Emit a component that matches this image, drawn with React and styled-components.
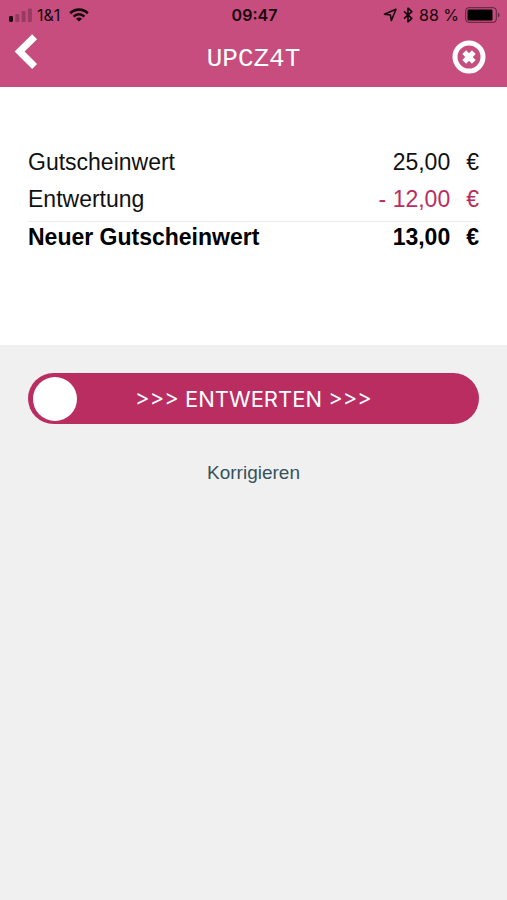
import React, { useState } from 'react';
import styled, { createGlobalStyle, css } from 'styled-components';

const colors = {
  header: '#c64d7d',
  primary: '#ba2d61',
  page: '#f0f0f0',
  line: '#ececec',
  link: '#37525b',
  status: '#16060d',
};

const GlobalStyle = createGlobalStyle`
  * {
    box-sizing: border-box;
  }
  body {
    margin: 0;
    background: ${colors.page};
    font-family: 'Liberation Sans', Arial, sans-serif;
  }
`;

const Header = styled.header`
  background: ${colors.header};
`;

const StatusBar = styled.div`
  display: grid;
  grid-template-columns: 1fr auto 1fr;
  align-items: center;
  height: 30px;
  padding: 0 7px 0 9px;
  color: ${colors.status};
  font-family: Inter, sans-serif;
  font-size: 16px;
  line-height: 20px;
`;

const StatusGroup = styled.div`
  display: flex;
  align-items: center;
  justify-content: ${(props) => (props.$end ? 'flex-end' : 'flex-start')};
  gap: ${(props) => (props.$end ? 6 : 4)}px;
`;

const Carrier = styled.span`
  margin-right: 5px;
`;

const Clock = styled.span`
  font-weight: 600;
`;

const NavBar = styled.nav`
  display: grid;
  grid-template-columns: 1fr auto 1fr;
  height: 57px;
  padding: 0 14px;
`;

const IconButton = styled.button`
  display: flex;
  padding: 0;
  border: 0;
  background: none;
  color: #fff;
  cursor: pointer;
`;

const BackButton = styled(IconButton)`
  justify-self: start;
  align-self: start;
  padding-top: 4px;
`;

const CloseButton = styled(IconButton)`
  justify-self: end;
  align-self: center;
  padding: 0 7px 4px 0;
`;

const Title = styled.h1`
  margin: 0;
  align-self: center;
  color: #fff;
  font-family: 'Liberation Mono', monospace;
  font-size: 26px;
  font-weight: 400;
  line-height: 30px;
`;

const Summary = styled.section`
  min-height: 258px;
  padding: 60px 28px;
  background: #fff;
`;

const ValueTable = styled.table`
  width: 100%;
  border-collapse: collapse;
  color: #111;
  font-size: 23px;
  line-height: 30px;
`;

const Row = styled.tr`
  ${(props) =>
    props.$total &&
    css`
      border-top: 1px solid ${colors.line};
      color: #000;
      font-weight: 700;
    `}
`;

const Label = styled.th`
  padding: 0 0 7px;
  font-weight: inherit;
  text-align: left;
`;

const Amount = styled.td`
  padding: 0 0 7px;
  color: ${(props) => (props.$negative ? colors.primary : 'inherit')};
  text-align: right;
  white-space: nowrap;
`;

const Currency = styled.span`
  margin-left: 16px;
`;

const Actions = styled.section`
  display: flex;
  flex-direction: column;
  align-items: center;
  gap: 37px;
  padding: 28px;
`;

const SlideLabel = styled.label`
  display: grid;
  align-items: center;
  width: 100%;
  height: 51px;
  border-radius: 26px;
  background: ${colors.primary};
  color: #fff;
`;

const SlideText = styled.span`
  grid-area: 1 / 1;
  text-align: center;
  font-family: Inter, sans-serif;
  font-size: 22px;
  line-height: 28px;
`;

const thumb = css`
  width: 44px;
  height: 44px;
  border: 0;
  border-radius: 50%;
  background: #fff;
  cursor: grab;
`;

const SlideInput = styled.input`
  grid-area: 1 / 1;
  z-index: 1;
  width: 100%;
  height: 51px;
  margin: 0;
  padding: 0 5px;
  appearance: none;
  background: transparent;

  &::-webkit-slider-thumb {
    appearance: none;
    ${thumb}
  }
  &::-moz-range-thumb {
    ${thumb}
  }
`;

const CorrectLink = styled.a`
  color: ${colors.link};
  font-size: 19px;
  line-height: 24px;
  text-decoration: none;
`;

function SignalIcon() {
  return (
    <svg width="24" height="14" viewBox="0 0 24 14" fill="currentColor" aria-hidden="true">
      <rect x="0" y="8" width="4" height="6" rx="1.4" />
      <g opacity="0.25">
        <rect x="6.3" y="6" width="4" height="8" rx="1" />
        <rect x="12.6" y="3" width="4" height="11" rx="1" />
        <rect x="18.9" y="0.5" width="4" height="13.5" rx="1" />
      </g>
    </svg>
  );
}

function WifiIcon() {
  return (
    <svg width="20" height="14" viewBox="0 0 20 14" fill="none" stroke="currentColor" aria-hidden="true">
      <path d="M1.2 5.2a12.4 12.4 0 0 1 17.6 0" strokeWidth="2.7" />
      <path d="M4.6 8.6a7.6 7.6 0 0 1 10.8 0" strokeWidth="2.5" />
      <path d="M10 13.6 7 10.7a4.2 4.2 0 0 1 6 0Z" fill="currentColor" stroke="none" />
    </svg>
  );
}

function LocationIcon() {
  return (
    <svg width="14" height="14" viewBox="0 0 14 14" fill="none" stroke="currentColor" aria-hidden="true">
      <path d="M13 1.2 1.4 6.2l6 .7.9 5.7Z" strokeWidth="1.5" strokeLinejoin="round" />
    </svg>
  );
}

function BluetoothIcon() {
  return (
    <svg width="10" height="16" viewBox="0 0 10 16" fill="none" stroke="currentColor" aria-hidden="true">
      <path d="M1 4.4 8.8 11.4 5 14.8V1.2l3.8 3.4L1 11.6" strokeWidth="1.6" strokeLinejoin="round" />
    </svg>
  );
}

function BatteryIcon() {
  return (
    <svg width="35" height="16" viewBox="0 0 35 16" aria-hidden="true">
      <rect x="0.7" y="0.7" width="30.6" height="14.6" rx="3" fill="none" stroke="currentColor" strokeOpacity="0.6" />
      <rect x="2.5" y="2.5" width="25" height="11" rx="1.2" fill="#000" />
      <path d="M33 5.5c2 1 2 4 0 5Z" fill="currentColor" fillOpacity="0.6" />
    </svg>
  );
}

function BackIcon() {
  return (
    <svg width="24" height="36" viewBox="0 0 24 36" fill="none" aria-hidden="true">
      <path d="M20.6 2.8 5.6 17.6l15 14.8" stroke="currentColor" strokeWidth="7" />
    </svg>
  );
}

function CloseIcon() {
  return (
    <svg width="34" height="34" viewBox="0 0 34 34" fill="none" stroke="currentColor" aria-hidden="true">
      <circle cx="17" cy="17" r="14" strokeWidth="5" />
      <path d="m12.2 12.2 9.6 9.6m0-9.6-9.6 9.6" strokeWidth="5.4" />
    </svg>
  );
}

function ValueRow({ label, amount, negative, total }) {
  return (
    <Row $total={total}>
      <Label scope="row">{label}</Label>
      <Amount $negative={negative}>
        {amount}
        <Currency>€</Currency>
      </Amount>
    </Row>
  );
}

export default function App() {
  const [slide, setSlide] = useState(0);

  return (
    <>
      <GlobalStyle />
      <Header>
        <StatusBar>
          <StatusGroup>
            <SignalIcon />
            <Carrier>1&amp;1</Carrier>
            <WifiIcon />
          </StatusGroup>
          <Clock>09:47</Clock>
          <StatusGroup $end>
            <LocationIcon />
            <BluetoothIcon />
            <span>88 %</span>
            <BatteryIcon />
          </StatusGroup>
        </StatusBar>
        <NavBar>
          <BackButton type="button" aria-label="Zurück">
            <BackIcon />
          </BackButton>
          <Title>UPCZ4T</Title>
          <CloseButton type="button" aria-label="Schließen">
            <CloseIcon />
          </CloseButton>
        </NavBar>
      </Header>
      <main>
        <Summary>
          <ValueTable>
            <tbody>
              <ValueRow label="Gutscheinwert" amount="25,00" />
              <ValueRow label="Entwertung" amount="- 12,00" negative />
              <ValueRow label="Neuer Gutscheinwert" amount="13,00" total />
            </tbody>
          </ValueTable>
        </Summary>
        <Actions>
          <SlideLabel>
            <SlideText>&gt;&gt;&gt; ENTWERTEN &gt;&gt;&gt;</SlideText>
            <SlideInput
              type="range"
              min="0"
              max="100"
              value={slide}
              onChange={(e) => setSlide(Number(e.target.value))}
            />
          </SlideLabel>
          <CorrectLink href="#korrigieren">Korrigieren</CorrectLink>
        </Actions>
      </main>
    </>
  );
}
